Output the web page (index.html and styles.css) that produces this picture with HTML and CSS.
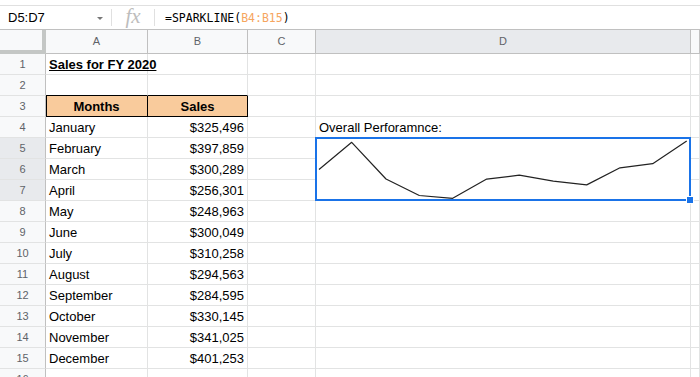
FILE: index.html
```html
<!DOCTYPE html>
<html lang="en">
<head>
  <meta charset="UTF-8">
  <title>Sales for FY 2020 - Sheet</title>
  <link rel="stylesheet" href="styles.css">
</head>
<body>

  <div class="toolbar-edge"></div>

  <div class="formula-bar">
    <div class="name-box">
      <span>D5:D7</span>
      <span class="caret"></span>
    </div>
    <div class="fx">fx</div>
    <div class="formula">=SPARKLINE(<span class="ref">B4:B15</span>)</div>
  </div>

  <div class="sheet">
    <!-- column headers -->
    <div class="corner"></div>
    <div class="hd">A</div>
    <div class="hd">B</div>
    <div class="hd">C</div>
    <div class="hd active">D</div>
    <div class="hd"></div>

    <div class="rh">1</div>
    <div class="c title">Sales for FY 2020</div><div class="c"></div><div class="c"></div><div class="c"></div><div class="c"></div>

    <div class="rh">2</div>
    <div class="c above-head"></div><div class="c above-head"></div><div class="c"></div><div class="c"></div><div class="c"></div>

    <div class="rh">3</div>
    <div class="c head first">Months</div><div class="c head">Sales</div><div class="c"></div><div class="c"></div><div class="c"></div>

    <div class="rh">4</div>
    <div class="c">January</div><div class="c num">$325,496</div><div class="c"></div><div class="c">Overall Perforamnce:</div><div class="c"></div>

    <div class="rh active">5</div>
    <div class="c">February</div><div class="c num">$397,859</div><div class="c"></div>
    <div class="c spark">
      <svg viewBox="0 0 374 62" width="374" height="62">
        <polyline points="3,31.5 35.7,4.3 70,41 103.3,57.5 136.7,60.3 170.7,41.1 203.3,37.2 237.3,43.1 270.7,46.9 304,29.8 336.7,25.7 370.7,3"/>
      </svg>
      <span class="handle"></span>
    </div>
    <div class="c"></div>

    <div class="rh active">6</div>
    <div class="c">March</div><div class="c num">$300,289</div><div class="c"></div><div class="c"></div>

    <div class="rh active">7</div>
    <div class="c">April</div><div class="c num">$256,301</div><div class="c"></div><div class="c"></div>

    <div class="rh">8</div>
    <div class="c">May</div><div class="c num">$248,963</div><div class="c"></div><div class="c"></div><div class="c"></div>

    <div class="rh">9</div>
    <div class="c">June</div><div class="c num">$300,049</div><div class="c"></div><div class="c"></div><div class="c"></div>

    <div class="rh">10</div>
    <div class="c">July</div><div class="c num">$310,258</div><div class="c"></div><div class="c"></div><div class="c"></div>

    <div class="rh">11</div>
    <div class="c">August</div><div class="c num">$294,563</div><div class="c"></div><div class="c"></div><div class="c"></div>

    <div class="rh">12</div>
    <div class="c">September</div><div class="c num">$284,595</div><div class="c"></div><div class="c"></div><div class="c"></div>

    <div class="rh">13</div>
    <div class="c">October</div><div class="c num">$330,145</div><div class="c"></div><div class="c"></div><div class="c"></div>

    <div class="rh">14</div>
    <div class="c">November</div><div class="c num">$341,025</div><div class="c"></div><div class="c"></div><div class="c"></div>

    <div class="rh">15</div>
    <div class="c">December</div><div class="c num">$401,253</div><div class="c"></div><div class="c"></div><div class="c"></div>

    <div class="rh">16</div>
    <div class="c"></div><div class="c"></div><div class="c"></div><div class="c"></div><div class="c"></div>
  </div>

</body>
</html>
```

FILE: styles.css
```css
:root {
  --grid: #e2e3e3;
  --head-line: #c0c0c0;
  --head-bg: #f8f9fa;
  --head-active: #e8eaed;
  --head-text: #5f6368;
  --blue: #1a73e8;
  --orange: #f9cb9c;
}

body {
  margin: 0;
  font-family: 'Liberation Sans', Arial, sans-serif;
  font-size: 13px;
  color: #000;
  background: #fff;
  overflow: hidden;
  height: 377px;
}

.toolbar-edge {
  height: 5px;
}

/* formula bar */
.formula-bar {
  height: 23px;
  border-top: 1px solid #e0e0e0;
  display: flex;
  align-items: center;
}

.name-box {
  width: 95px;
  padding-left: 8px;
  display: flex;
  align-items: center;
  justify-content: space-between;
  padding-right: 8px;
  border-right: 1px solid #e0e0e0;
  height: 17px;
  box-sizing: content-box;
}

.caret {
  width: 0;
  height: 0;
  border-left: 3px solid transparent;
  border-right: 3px solid transparent;
  border-top: 3px solid #777;
  margin-top: 2px;
}

.fx {
  width: 42px;
  text-align: center;
  font-family: 'Liberation Serif', serif;
  font-style: italic;
  font-size: 21px;
  color: #bdbdbd;
  border-right: 1px solid #e0e0e0;
  height: 17px;
  line-height: 15px;
}

.formula {
  padding-left: 10px;
  font-family: 'DejaVu Sans Mono', monospace;
  font-size: 11.5px;
  color: #000;
}

.ref {
  color: #f6a55e;
}

/* grid */
.sheet {
  display: grid;
  grid-template-columns: 46px 102px 100px 68px 375px 1fr;
  grid-template-rows: 24px repeat(16, 21px);
  border-top: 1px solid var(--head-line);
}

.corner {
  background: var(--head-bg);
  border-right: 4px solid #c4c7c5;
  border-bottom: 4px solid #c4c7c5;
}

.hd {
  background: var(--head-bg);
  color: var(--head-text);
  font-size: 11px;
  text-align: center;
  line-height: 23px;
  border-right: 1px solid var(--head-line);
  border-bottom: 1px solid var(--head-line);
}

.hd.active,
.rh.active {
  background: var(--head-active);
}

.rh {
  background: var(--head-bg);
  color: var(--head-text);
  font-size: 11px;
  text-align: center;
  line-height: 20px;
  border-right: 1px solid var(--head-line);
  border-bottom: 1px solid var(--grid);
}

.c {
  border-right: 1px solid var(--grid);
  border-bottom: 1px solid var(--grid);
  line-height: 20px;
  padding: 1px 3px 0;
  white-space: nowrap;
  overflow: hidden;
}

.num {
  text-align: right;
}

.title {
  font-weight: bold;
  text-decoration: underline;
  overflow: visible;
}

.above-head {
  border-bottom-color: #000;
}

.head {
  background: var(--orange);
  font-weight: bold;
  text-align: center;
  border-right-color: #000;
  border-bottom-color: #000;
}

.head.first {
  box-shadow: inset 1px 0 0 #000;
}

/* merged D5:D7 with the sparkline */
.spark {
  grid-column: 5;
  grid-row: 6 / span 3;
  position: relative;
  padding: 0;
  overflow: visible;
}

.spark svg {
  display: block;
}

.spark polyline {
  fill: none;
  stroke: #222;
  stroke-width: 1.2;
  stroke-linejoin: round;
}

.spark::after {
  content: '';
  position: absolute;
  top: -1px;
  left: -1px;
  right: -1px;
  bottom: -1px;
  border: 2px solid var(--blue);
}

.handle {
  position: absolute;
  right: -4px;
  bottom: -4px;
  width: 6px;
  height: 6px;
  background: var(--blue);
  border: 1px solid #fff;
  z-index: 1;
}
```
